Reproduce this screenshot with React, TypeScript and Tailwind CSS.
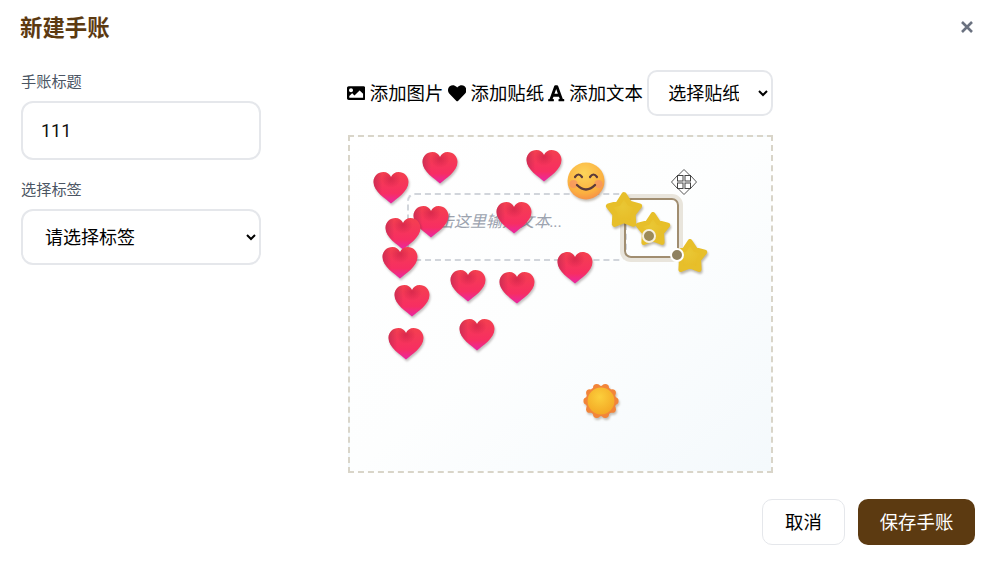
import { FaFont, FaHeart, FaImage } from "react-icons/fa"

const cjk = "font-['Roboto','Noto_Sans_CJK_SC',sans-serif]"

const hearts = [
  [440, 168],
  [544, 166],
  [391, 188],
  [431, 222],
  [403, 234],
  [514, 218],
  [400, 263],
  [575, 268],
  [468, 286],
  [517, 288],
  [412, 301],
  [406, 344],
  [477, 335],
]

const stars = [
  { x: 624, y: 210, size: 42 },
  { x: 653, y: 229, size: 40 },
  { x: 690, y: 256, size: 40 },
]

// scallops round the sun
const sunLobes = [0, 36, 72, 108, 144, 180, 216, 252, 288, 324].map((deg) => ({
  x: 20 + 15 * Math.cos((deg * Math.PI) / 180),
  y: 20 + 15 * Math.sin((deg * Math.PI) / 180),
}))

function Defs() {
  return (
    <svg width="0" height="0" className="absolute">
      <defs>
        <linearGradient id="heartFill" x1="0" y1="0" x2="0" y2="1">
          <stop offset="0" stopColor="#f4404f" />
          <stop offset="0.68" stopColor="#f72e62" />
          <stop offset="1" stopColor="#ea26a4" />
        </linearGradient>
        <linearGradient id="heartEdge" x1="0" y1="0" x2="1" y2="0">
          <stop offset="0" stopColor="#a8234f" stopOpacity="0.5" />
          <stop offset="0.25" stopColor="#a8234f" stopOpacity="0" />
        </linearGradient>
        <radialGradient id="heartCrease" cx="0.5" cy="0.22" r="0.28">
          <stop offset="0" stopColor="#b01040" stopOpacity="0.4" />
          <stop offset="1" stopColor="#b01040" stopOpacity="0" />
        </radialGradient>
        <radialGradient id="starFill" cx="0.45" cy="0.4" r="0.6">
          <stop offset="0" stopColor="#e9c734" />
          <stop offset="1" stopColor="#e7bb26" />
        </radialGradient>
        <radialGradient id="smileFill" cx="0.45" cy="0.3" r="0.75">
          <stop offset="0" stopColor="#fdd45a" />
          <stop offset="0.7" stopColor="#fbb040" />
          <stop offset="1" stopColor="#f58a4a" />
        </radialGradient>
        <radialGradient id="sunFill" cx="0.45" cy="0.35" r="0.7">
          <stop offset="0" stopColor="#fbcf3c" />
          <stop offset="1" stopColor="#f3a523" />
        </radialGradient>
      </defs>
    </svg>
  )
}

function Heart({ x, y }: { x: number; y: number }) {
  const d = "M18 32 C13 27.500 0.500 20 0.500 10.500 C0.500 4.500 5 0.500 10.500 0.500 C14 0.500 16.800 2.500 18 5.500 C19.200 2.500 22 0.500 25.500 0.500 C31 0.500 35.500 4.500 35.500 10.500 C35.500 20 23 27.500 18 32 Z"
  return (
    <svg
      viewBox="0 0 36 33"
      width="36"
      height="33"
      className="absolute -translate-x-1/2 -translate-y-1/2 drop-shadow-[1px_2px_1px_rgba(60,40,40,0.3)]"
      style={{ left: x, top: y }}
    >
      <path d={d} fill="url(#heartFill)" />
      <path d={d} fill="url(#heartEdge)" />
      <path d={d} fill="url(#heartCrease)" />
    </svg>
  )
}

function Star({ x, y, size }: { x: number; y: number; size: number }) {
  return (
    <svg
      viewBox="0 0 40 40"
      width={size}
      height={size}
      className="absolute -translate-x-1/2 -translate-y-1/2 drop-shadow-[1px_2px_1px_rgba(70,50,20,0.35)]"
      style={{ left: x, top: y }}
    >
      <polygon
        points="20,5.500 25.300,13.700 34.700,16.200 28.600,23.800 29.100,33.500 20,30 10.900,33.500 11.400,23.800 5.300,16.200 14.700,13.700"
        fill="url(#starFill)"
        stroke="#e7bf2a"
        strokeWidth="5"
        strokeLinejoin="round"
      />
    </svg>
  )
}

function Sticker({ left, top, size, children }: { left: number; top: number; size: number; children: React.ReactNode }) {
  return (
    <svg
      viewBox="0 0 40 40"
      width={size}
      height={size}
      className="absolute -translate-x-1/2 -translate-y-1/2 drop-shadow-[1px_2px_1px_rgba(70,50,20,0.3)]"
      style={{ left, top }}
    >
      {children}
    </svg>
  )
}

export default function App() {
  return (
    <div className={`relative flex h-[568px] w-full flex-col overflow-hidden bg-white ${cjk}`}>
      <Defs />

      <header className="flex h-[56px] items-center justify-between pl-[20px] pr-[5px]">
        <h2 className="text-[22.4px] leading-none font-bold text-[#5c3a11]">新建手账</h2>
        <button className="-mt-[2px] flex h-8 w-8 items-center justify-center text-[#6b7280]">
          <svg viewBox="0 0 14 14" width="14" height="14" fill="none" stroke="currentColor" strokeWidth="2.600">
            <path d="M2 2 L12 12 M12 2 L2 12" />
          </svg>
        </button>
      </header>

      <div className="flex flex-1">
        <div className="ml-[21px] flex w-[240px] shrink-0 flex-col pt-[16px]">
          <label className="mb-[9px] text-[15.2px] leading-[20px] text-[#4b5563]">手账标题</label>
          <input
            defaultValue="111"
            className="mb-[20px] h-[59px] rounded-[12px] border-2 border-[#e5e7eb] bg-white px-[18px] text-[18px] text-[#111] outline-none"
          />
          <label className="mb-[9px] text-[15.2px] leading-[20px] text-[#4b5563]">选择标签</label>
          <select className="h-[56px] rounded-[12px] border-2 border-[#e5e7eb] bg-white px-[18px] text-[18px] text-black outline-none">
            <option>请选择标签</option>
          </select>
        </div>

        <div className="ml-[86px] flex w-[428px] shrink-0 flex-col pt-[14px]">
          <div className="flex h-[46px] items-center gap-[4.4px] text-[18.4px] whitespace-nowrap text-black">
            <FaImage className="shrink-0" />
            <span className="pt-[2px]">添加图片</span>
            <FaHeart className="shrink-0" />
            <span className="pt-[2px]">添加贴纸</span>
            <FaFont className="-ml-[2px] shrink-0" />
            <span className="pt-[2px]">添加文本</span>
            <select className="h-[46px] w-[126px] shrink-0 rounded-[10px] border-2 border-[#e5e7eb] bg-white pr-[16px] pl-[15px] text-[18px] outline-none">
              <option>选择贴纸</option>
            </select>
          </div>

          <div className="mt-[19px] ml-[1px] h-[338px] w-[425px] border-2 border-dashed border-[#d9d5c9] bg-gradient-to-br from-white via-[#fdfefe] to-[#f4f9fc]" />
        </div>
      </div>

      <footer className="flex h-[69px] items-start justify-end gap-[13px] pr-[13px]">
        <button className="h-[46px] w-[83px] rounded-[10px] border border-[#e5e7eb] bg-white pt-[2px] text-[18.4px] text-black">取消</button>
        <button className="h-[46px] w-[117px] rounded-[10px] bg-[#5c3a11] pt-[2px] text-[18.4px] text-white">保存手账</button>
      </footer>

      {/* free canvas items, placed in page coordinates */}
      <div className="absolute inset-0">
        <div className="absolute top-[193px] left-[407px] flex h-[68px] w-[220px] items-center rounded-[8px] border-2 border-dashed border-[#d1d5db] pb-[10px] pl-[13px] text-[16px] text-[#9ca3af] italic">
          点击这里输入文本...
        </div>

        {hearts.map(([x, y]) => (
          <Heart key={`${x}-${y}`} x={x} y={y} />
        ))}

        <Sticker left={586} top={181} size={40}>
          <circle cx="20" cy="20" r="18.500" fill="url(#smileFill)" />
          <circle cx="7.500" cy="23" r="4" fill="#f58a6a" opacity="0.6" />
          <circle cx="32.500" cy="23" r="4" fill="#f58a6a" opacity="0.6" />
          <path d="M9 16 Q12.500 11 16 16 M24 16 Q27.500 11 31 16" fill="none" stroke="#5b3a3a" strokeWidth="2.200" strokeLinecap="round" />
          <path d="M11 24 Q20 33 29 24" fill="none" stroke="#5b3a3a" strokeWidth="2.400" strokeLinecap="round" />
        </Sticker>

        <Sticker left={601} top={401} size={37}>
          {sunLobes.map((l) => (
            <circle key={`${l.x}-${l.y}`} cx={l.x} cy={l.y} r="4" fill="#f2853a" />
          ))}
          <circle cx="20" cy="20" r="16.500" fill="#f2853a" />
          <circle cx="20" cy="20" r="14.500" fill="url(#sunFill)" />
        </Sticker>

        {/* selected sticker frame */}
        <div className="absolute top-[194px] left-[620px] h-[68px] w-[63px] rounded-[11px] border-[4px] border-[#e9e5dc]">
          <div className="h-full w-full rounded-[7px] border-[2px] border-[#a08d70]" />
        </div>

        {stars.map((s) => (
          <Star key={s.x} x={s.x} y={s.y} size={s.size} />
        ))}

        <span className="absolute top-[229px] left-[642px] h-[14px] w-[14px] rounded-full border-2 border-[#f5efe0] bg-[#9c8a58]" />
        <span className="absolute top-[248px] left-[670px] h-[14px] w-[14px] rounded-full border-2 border-white bg-[#8f8160]" />

        <svg viewBox="0 0 26 26" width="26" height="26" className="absolute top-[169px] left-[671px]">
          <path d="M13 0.500 L19 6.500 L19.500 6.500 L25.500 13 L19.500 19.500 L19 19.500 L13 25.500 L7 19.500 L6.500 19.500 L0.500 13 L6.500 6.500 L7 6.500 Z" fill="#fff" stroke="#555" strokeWidth="1" strokeLinejoin="round" />
          <rect x="6.500" y="6.500" width="5.500" height="5.500" fill="#fff" stroke="#444" strokeWidth="1" />
          <rect x="14" y="6.500" width="5.500" height="5.500" fill="#fff" stroke="#444" strokeWidth="1" />
          <rect x="6.500" y="14" width="5.500" height="5.500" fill="#fff" stroke="#444" strokeWidth="1" />
          <rect x="14" y="14" width="5.500" height="5.500" fill="#fff" stroke="#444" strokeWidth="1" />
        </svg>
      </div>
    </div>
  )
}
